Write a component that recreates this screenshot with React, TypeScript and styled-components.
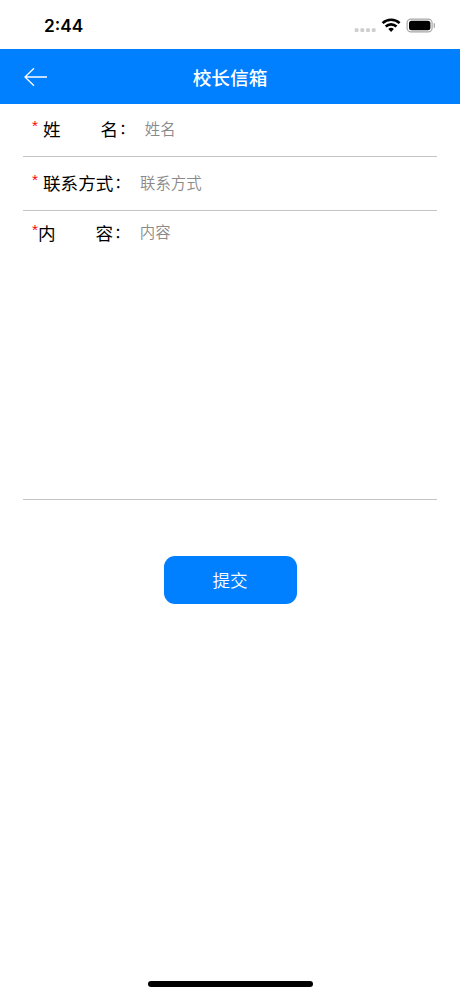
import React from 'react';
import styled, { createGlobalStyle } from 'styled-components';

const GlobalStyle = createGlobalStyle`
  * { box-sizing: border-box; }
  body {
    margin: 0;
    background: #fff;
    font-family: "Inter", "Noto Sans CJK SC", sans-serif;
  }
`;

const Screen = styled.div`
  display: flex;
  flex-direction: column;
  width: 460px;
  height: 996px;
  background: #fff;
  overflow: hidden;
`;

const StatusBar = styled.div`
  display: flex;
  align-items: center;
  justify-content: space-between;
  height: 49px;
  padding: 2px 24px 0 44px;
`;

const Clock = styled.span`
  font-size: 17.3px;
  font-weight: 600;
  line-height: 22px;
  color: #000;
`;

const StatusIcons = styled.svg`
  display: block;
  width: 84px;
  height: 20px;
`;

const Header = styled.header`
  display: grid;
  grid-template-columns: 60px 1fr 60px;
  align-items: center;
  height: 55px;
  background: #007fff;
`;

const BackButton = styled.button`
  display: flex;
  padding: 0 0 0 23px;
  border: 0;
  background: none;
`;

const Title = styled.h1`
  margin: 0;
  font: 500 18.7px/28px "Noto Sans CJK SC", sans-serif;
  color: #fff;
  text-align: center;
`;

const Form = styled.form`
  display: flex;
  flex-direction: column;
  margin: 0 23px;
`;

const Field = styled.label<{ $height: number; $top: number }>`
  display: flex;
  align-items: flex-start;
  height: ${(p) => p.$height}px;
  padding: ${(p) => p.$top}px 0 0 9px;
  border-bottom: 1px solid #c4c4c4;
`;

const Required = styled.span<{ $width: number }>`
  flex: none;
  width: ${(p) => p.$width}px;
  font: 15.4px/19px "Liberation Sans", sans-serif;
  color: #f00;
`;

const Caption = styled.span<{ $gap: number }>`
  display: flex;
  flex: none;
  gap: ${(p) => p.$gap}px;
  font: 400 17.6px/26px "Noto Sans CJK SC", sans-serif;
  color: #000;
`;

const Colon = styled.span`
  flex: none;
  width: 17.6px;
  padding-left: 1px;
  font: 400 15px/24px "Noto Sans CJK SC", sans-serif;
  color: #000;
`;

const inputText = `
  flex: 1;
  min-width: 0;
  margin: 0 0 0 9px;
  padding: 0;
  border: 0;
  outline: 0;
  background: none;
  resize: none;
  font: 350 15.4px/22px "Noto Sans CJK SC", sans-serif;
  color: #000;
  &::placeholder { color: #8a8a8a; opacity: 1; }
`;

const TextInput = styled.input`
  ${inputText}
  height: 23px;
`;

const TextArea = styled.textarea`
  ${inputText}
  height: 260px;
`;

const Submit = styled.button`
  align-self: center;
  width: 133px;
  height: 48px;
  margin-top: 56px;
  padding: 0;
  border: 0;
  border-radius: 11px;
  background: #007fff;
  font: 350 17.6px/26px "Noto Sans CJK SC", sans-serif;
  color: #fff;
`;

const HomeIndicator = styled.div`
  align-self: center;
  width: 165px;
  height: 6px;
  margin: auto 0 9px;
  border-radius: 3px;
  background: #000;
`;

export default function App() {
  return (
    <>
      <GlobalStyle />
      <Screen>
        <StatusBar>
          <Clock>2:44</Clock>
          <StatusIcons viewBox="2.5 0.5 84 20">
            <g fill="#cecece">
              <rect x="5.2" y="12.8" width="3.8" height="3.8" rx="1" />
              <rect x="10.9" y="12.8" width="3.8" height="3.8" rx="1" />
              <rect x="16.6" y="12.8" width="3.8" height="3.8" rx="1" />
              <rect x="22.3" y="12.8" width="3.8" height="3.8" rx="1" />
            </g>
            <g fill="none" stroke="#000" strokeWidth="2.6">
              <path d="M33.1 7.6a12.3 12.3 0 0 1 17 0" />
              <path d="M36.2 11a7.8 7.8 0 0 1 10.8 0" />
            </g>
            <path d="M38.8 13.5a4.1 4.1 0 0 1 5.6 0L41.6 16.4z" fill="#000" />
            <rect x="57.6" y="3.6" width="25" height="12.8" rx="3.9" fill="none" stroke="#a6a6a6" strokeWidth="1.2" />
            <rect x="59.5" y="5.2" width="21.4" height="9.6" rx="2.5" fill="#000" />
            <path d="M84.8 7.8v4.4" stroke="#a6a6a6" strokeWidth="1.3" />
          </StatusIcons>
        </StatusBar>
        <Header>
          <BackButton type="button" aria-label="返回">
            <svg width="26" height="20" viewBox="0 0 26 20" fill="none" stroke="#fff" strokeWidth="1.3">
              <path d="M24 10H2M11 1.3 2 10l9 8.7" />
            </svg>
          </BackButton>
          <Title>校长信箱</Title>
        </Header>
        <Form>
          <Field $height={53} $top={12}>
            <Required $width={11}>*</Required>
            <Caption $gap={40}>
              <span>姓</span>
              <span>名</span>
            </Caption>
            <Colon>：</Colon>
            <TextInput placeholder="姓名" />
          </Field>
          <Field $height={54} $top={13}>
            <Required $width={11}>*</Required>
            <Caption $gap={0}>联系方式</Caption>
            <Colon>：</Colon>
            <TextInput placeholder="联系方式" />
          </Field>
          <Field $height={289} $top={9}>
            <Required $width={6}>*</Required>
            <Caption $gap={40}>
              <span>内</span>
              <span>容</span>
            </Caption>
            <Colon>：</Colon>
            <TextArea placeholder="内容" />
          </Field>
          <Submit type="button">提交</Submit>
        </Form>
        <HomeIndicator />
      </Screen>
    </>
  );
}
